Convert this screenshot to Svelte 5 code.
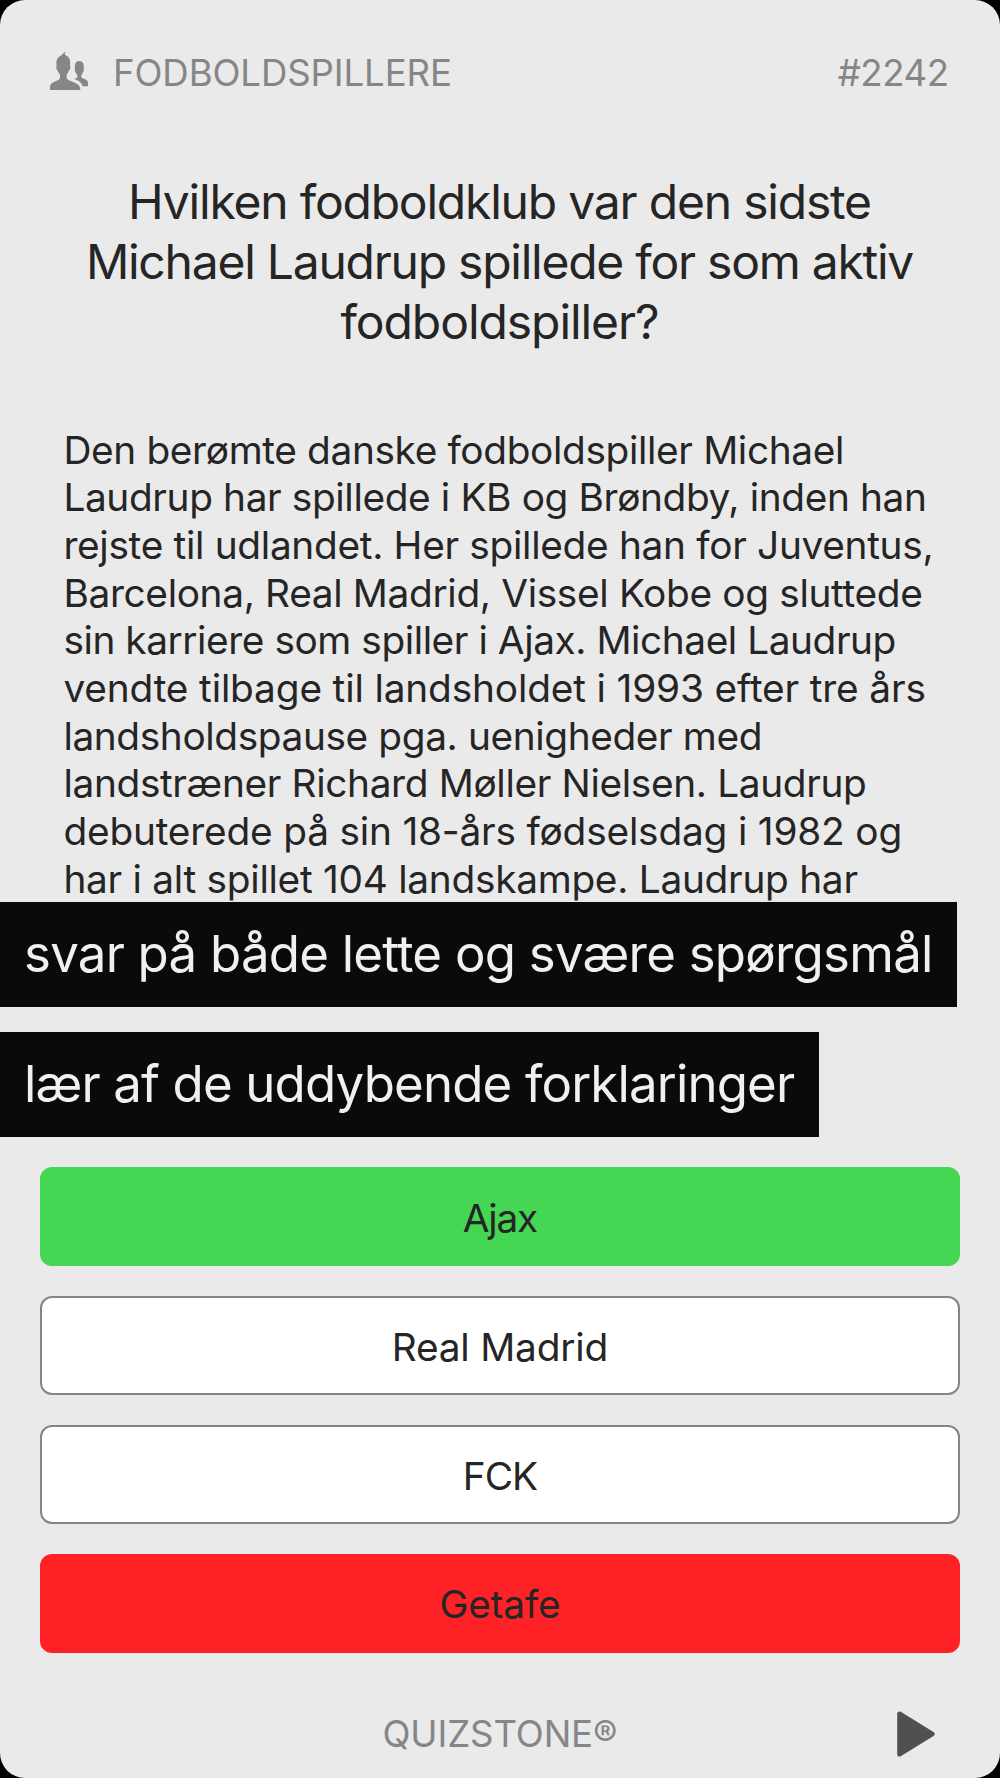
<script lang="ts">
  type Line = { text: string; ink: number };

  const family = 'Inter';
  const context = document.createElement('canvas').getContext('2d')!;

  // Letter spacing that sets a line of text to the given drawn width.
  function tracking(line: Line, size: number): string {
    context.font = `400 ${size}px ${family}`;
    const m = context.measureText(line.text);
    const natural = m.actualBoundingBoxRight + m.actualBoundingBoxLeft;
    return ((line.ink - natural) / (line.text.length - 1)).toFixed(3) + 'px';
  }

  const category: Line = { text: 'FODBOLDSPILLERE', ink: 334 };
  const number: Line = { text: '#2242', ink: 109 };
  const brand: Line = { text: 'QUIZSTONE', ink: 206.6 };

  const question: Line[] = [
    { text: 'Hvilken fodboldklub var den sidste', ink: 738 },
    { text: 'Michael Laudrup spillede for som aktiv', ink: 823.5 },
    { text: 'fodboldspiller?', ink: 317.5 }
  ];

  const explanation: Line[] = [
    { text: 'Den berømte danske fodboldspiller Michael', ink: 775.6 },
    { text: 'Laudrup har spillede i KB og Brøndby, inden han', ink: 857.6 },
    { text: 'rejste til udlandet. Her spillede han for Juventus,', ink: 865 },
    { text: 'Barcelona, Real Madrid, Vissel Kobe og sluttede', ink: 854.8 },
    { text: 'sin karriere som spiller i Ajax. Michael Laudrup', ink: 829.2 },
    { text: 'vendte tilbage til landsholdet i 1993 efter tre års', ink: 860 },
    { text: 'landsholdspause pga. uenigheder med', ink: 694.3 },
    { text: 'landstræner Richard Møller Nielsen. Laudrup', ink: 799.7 },
    { text: 'debuterede på sin 18-års fødselsdag i 1982 og', ink: 835 },
    { text: 'har i alt spillet 104 landskampe. Laudrup har', ink: 792 }
  ];

  const captions: Line[] = [
    { text: 'svar på både lette og svære spørgsmål', ink: 904 },
    { text: 'lær af de uddybende forklaringer', ink: 768 }
  ];

  const answers: (Line & { state: string })[] = [
    { text: 'Ajax', ink: 74.5, state: 'correct' },
    { text: 'Real Madrid', ink: 210.7, state: 'plain' },
    { text: 'FCK', ink: 71.2, state: 'plain' },
    { text: 'Getafe', ink: 117.5, state: 'wrong' }
  ];
</script>

<main class="card">
  <header class="top">
    <svg class="people" viewBox="0 0 138 138" aria-hidden="true">
      <path d="M12 126v-9c0-8 5-12 12-15l11-5c5-2 7-5 7-9V80c-3-3-6-7-7-13-3-1-5-6-4-11 0-2 1-3 1-4-3-14 2-24 12-29 4-2 7-8 15-12-3 4-3 8-1 11 11 4 17 14 14 30 0 1 1 2 1 4 1 5-1 10-4 11-1 6-4 10-7 13v8c0 4 2 7 7 9l14 6c14 5 20 12 20 23z" />
      <path d="M84 93c6-2 10-3 10-6v-6c-3-2-4-5-5-9-2-1-3-4-2-8-2-15 2-25 13-25s15 10 13 25c1 4 0 7-2 8-1 4-2 7-5 9v5c0 3 3 4 8 6 8 3 12 6 12 12v11h-16c-4-12-12-18-26-22z" />
    </svg>
    <span class="category" style:letter-spacing={tracking(category, 36.6)}>{category.text}</span>
    <span class="number" style:letter-spacing={tracking(number, 36.6)}>{number.text}</span>
  </header>

  <h1 class="question">
    {#each question as line}
      <span class="line" style:letter-spacing={tracking(line, 48)}>{line.text}</span>
    {/each}
  </h1>

  <p class="explanation">
    {#each explanation as line}
      <span class="line" style:letter-spacing={tracking(line, 38.8)}>{line.text}</span>
    {/each}
  </p>

  <section class="captions">
    {#each captions as line}
      <div class="caption" style:letter-spacing={tracking(line, 51)}>{line.text}</div>
    {/each}
  </section>

  <section class="answers">
    {#each answers as answer}
      <button class="answer {answer.state}" style:letter-spacing={tracking(answer, 38.8)}>{answer.text}</button>
    {/each}
  </section>

  <footer class="bottom">
    <span class="brand" style:letter-spacing={tracking(brand, 36.6)}>{brand.text}<span class="mark">®</span></span>
    <button class="next" aria-label="Næste">
      <svg viewBox="0 0 38 46" aria-hidden="true">
        <path d="M2.5 2.8 35.3 23 2.5 43.2z" />
      </svg>
    </button>
  </footer>
</main>

<style>
  :global(body) {
    background: #000;
  }

  .card {
    box-sizing: border-box;
    width: 1000px;
    height: 1778px;
    display: flex;
    flex-direction: column;
    overflow: hidden;
    border-radius: 25px;
    background: #eaeaea;
    color: #252525;
    font-family: Inter, 'Liberation Sans', sans-serif;
    font-weight: 400;
    white-space: nowrap;
  }

  .top {
    display: flex;
    align-items: center;
    height: 145px;
    padding: 0 51.5px 0 46px;
    box-sizing: border-box;
    flex: none;
    font-size: 36.6px;
    color: #868686;
  }

  .people {
    width: 46px;
    height: 46px;
    margin-right: 21px;
    margin-bottom: 3px;
    fill: #868686;
  }

  .number {
    margin-left: auto;
  }

  .line {
    display: block;
  }

  .question {
    flex: none;
    margin: 27.2px 1px 0 0;
    height: 179px;
    font-size: 48px;
    font-weight: 400;
    line-height: 59.67px;
    text-align: center;
  }

  .explanation {
    flex: none;
    margin: 74.6px 0 0;
    padding-left: 63.4px;
    height: 476.2px;
    font-size: 38.8px;
    line-height: 47.67px;
  }

  .captions {
    flex: none;
    display: flex;
    flex-direction: column;
    align-items: flex-start;
    gap: 25.5px;
  }

  .caption {
    box-sizing: border-box;
    height: 105px;
    padding: 0 24.5px 0 24px;
    background: #0a0a0a;
    color: #f0f0f0;
    font-size: 51px;
    line-height: 103px;
  }

  .answers {
    flex: none;
    display: flex;
    flex-direction: column;
    gap: 29.8px;
    margin: 30px 39.6px 0 40.4px;
  }

  .answer {
    box-sizing: border-box;
    height: 99px;
    padding: 1px 1px 0 0;
    border: 2px solid #858585;
    border-radius: 12px;
    background: #fff;
    color: #252525;
    font-family: inherit;
    font-size: 38.8px;
    line-height: 93px;
    text-align: center;
  }

  .correct {
    border-color: #45d653;
    background: #45d653;
  }

  .wrong {
    border-color: #fe2226;
    background: #fe2226;
  }

  .bottom {
    flex: none;
    display: grid;
    grid-template-columns: 1fr auto 1fr;
    align-items: center;
    height: 88px;
    margin-top: 37px;
    padding: 0 65px;
    font-size: 36.6px;
    color: #868686;
  }

  .brand {
    grid-column: 2;
  }

  .mark {
    letter-spacing: 0;
  }

  .next {
    justify-self: end;
    display: flex;
    padding: 0;
    border: 0;
    background: none;
  }

  .next svg {
    width: 38px;
    height: 46px;
    fill: #505050;
    stroke: #505050;
    stroke-width: 4.6;
    stroke-linejoin: round;
  }
</style>
